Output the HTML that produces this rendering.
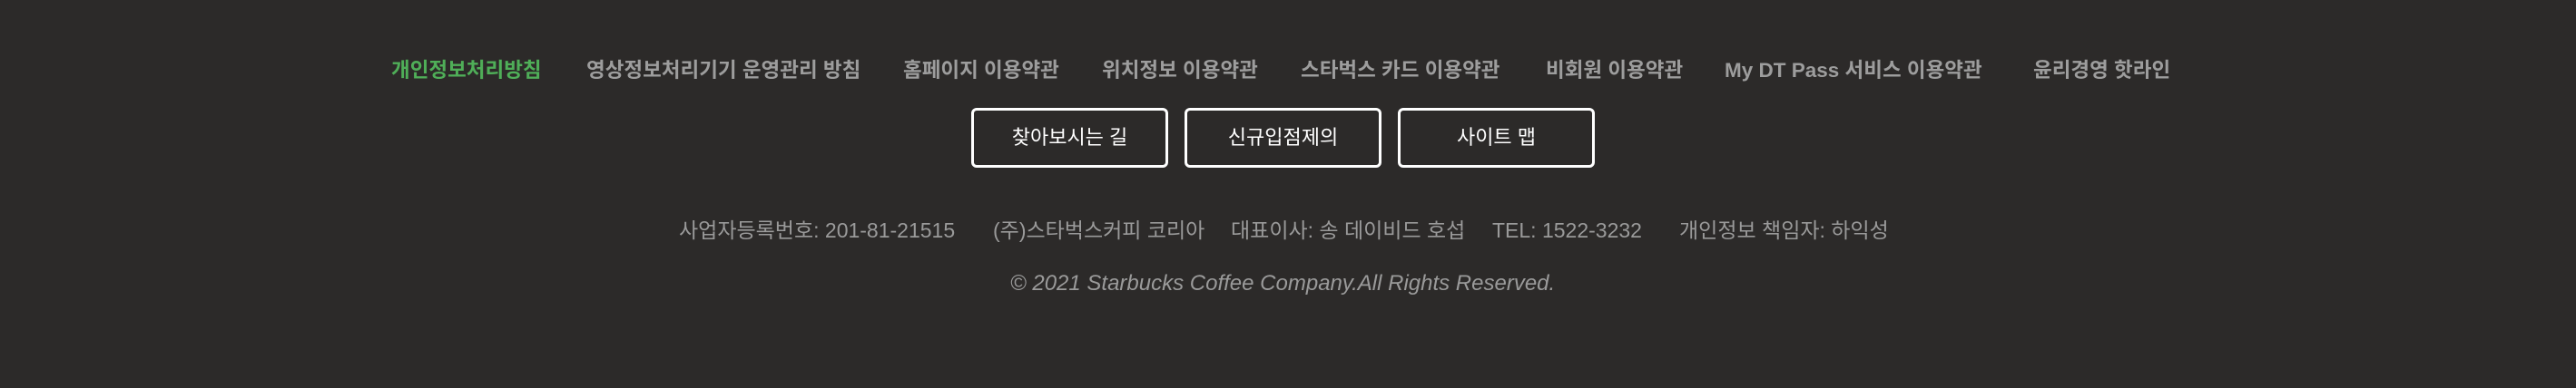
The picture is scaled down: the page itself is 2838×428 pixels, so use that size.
<!DOCTYPE html>
<html><head><meta charset="utf-8"><style>
html,body{margin:0;padding:0}
body{width:2838px;height:428px;background:#2c2a29;position:relative;overflow:hidden;font-family:"Liberation Sans","Noto Sans CJK KR",sans-serif}
.n{position:absolute;top:62px;font-size:22.5px;font-weight:bold;color:#9d9d9d;white-space:nowrap;line-height:32px}
.g{color:#4fae58}
.b{position:absolute;top:119px;width:211px;height:60px;border:3px solid #fff;border-radius:6px;color:#fff;font-size:22px;text-align:center;line-height:60px}
.i{position:absolute;top:238px;font-size:23px;color:#9a9a9a;white-space:nowrap;line-height:32px}
.c{position:absolute;top:297px;left:1113px;width:600px;text-align:center;font-size:24px;font-style:italic;color:#9a9a9a;white-space:nowrap;line-height:32px}
</style></head><body>
<span class="n g" style="left:431px">개인정보처리방침</span>
<span class="n" style="left:646px">영상정보처리기기 운영관리 방침</span>
<span class="n" style="left:995px">홈페이지 이용약관</span>
<span class="n" style="left:1214px">위치정보 이용약관</span>
<span class="n" style="left:1433px">스타벅스 카드 이용약관</span>
<span class="n" style="left:1703px">비회원 이용약관</span>
<span class="n" style="left:1900px">My DT Pass 서비스 이용약관</span>
<span class="n" style="left:2240px">윤리경영 핫라인</span>
<div class="b" style="left:1070px">찾아보시는 길</div>
<div class="b" style="left:1305px">신규입점제의</div>
<div class="b" style="left:1540px">사이트 맵</div>
<span class="i" style="left:748px">사업자등록번호: 201-81-21515</span>
<span class="i" style="left:1094px">(주)스타벅스커피 코리아</span>
<span class="i" style="left:1356px">대표이사: 송 데이비드 호섭</span>
<span class="i" style="left:1644px">TEL: 1522-3232</span>
<span class="i" style="left:1850px">개인정보 책임자: 하익성</span>
<div class="c">© 2021 Starbucks Coffee Company.All Rights Reserved.</div>
</body></html>
